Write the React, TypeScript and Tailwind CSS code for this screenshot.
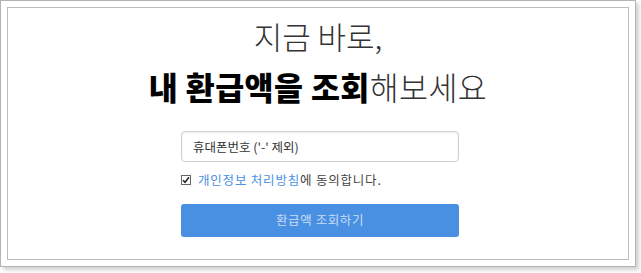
import React from "react";

const KR = "font-['Noto_Sans_CJK_KR','Noto_Sans',sans-serif]";

export default function App() {
  return (
    <div className={`w-[641px] h-[273px] bg-white ${KR}`}>
      {/* outer frame */}
      <div className="w-[636px] h-[267px] border border-[#b3b3b3] p-[6px] shadow-[3px_3px_4px_rgba(0,0,0,0.18)] bg-white">
        {/* inner card */}
        <div className="h-full border border-[#bdbdbd] flex flex-col items-center pt-[3px] pl-[4px]">
          <h1 className="text-center text-[31px] leading-[50px] text-[#333] -ml-[4px]">
            <div className="font-light">지금 바로,</div>
            <div className="text-[31.5px] tracking-[0.4px]">
              <span className="font-black text-black">내 환급액을 조회</span>
              <span className="font-light">해보세요</span>
            </div>
          </h1>

          <input
            type="text"
            placeholder="휴대폰번호 ('-' 제외)"
            className="mt-[20px] w-[278px] h-[31px] rounded-[4px] border border-[#cfcfcf] px-[11px] text-[12.5px] text-[#333] placeholder:text-[#333] shadow-[inset_0_1px_2px_rgba(0,0,0,0.08)] outline-none"
          />

          <label className="mt-[9px] w-[278px] h-[18px] flex items-center text-[12.5px] tracking-[0.8px]">
            <span className="w-[10px] h-[10px] border border-[#666] bg-white flex items-center justify-center mr-[7px]">
              <svg width="8" height="8" viewBox="0 0 8 8">
                <path d="M1 4.2 L3 6.2 L7 1.2" stroke="#222" strokeWidth="1.6" fill="none" />
              </svg>
            </span>
            <span className="text-[#4a90e2]">개인정보 처리방침</span>
            <span className="text-[#444]">에 동의합니다.</span>
          </label>

          <button className="mt-[15px] w-[278px] h-[33px] rounded-[3px] bg-[#4a90e2] text-[#c8dcf5] text-[12.5px] tracking-[0.6px]">
            환급액 조회하기
          </button>
        </div>
      </div>
    </div>
  );
}
